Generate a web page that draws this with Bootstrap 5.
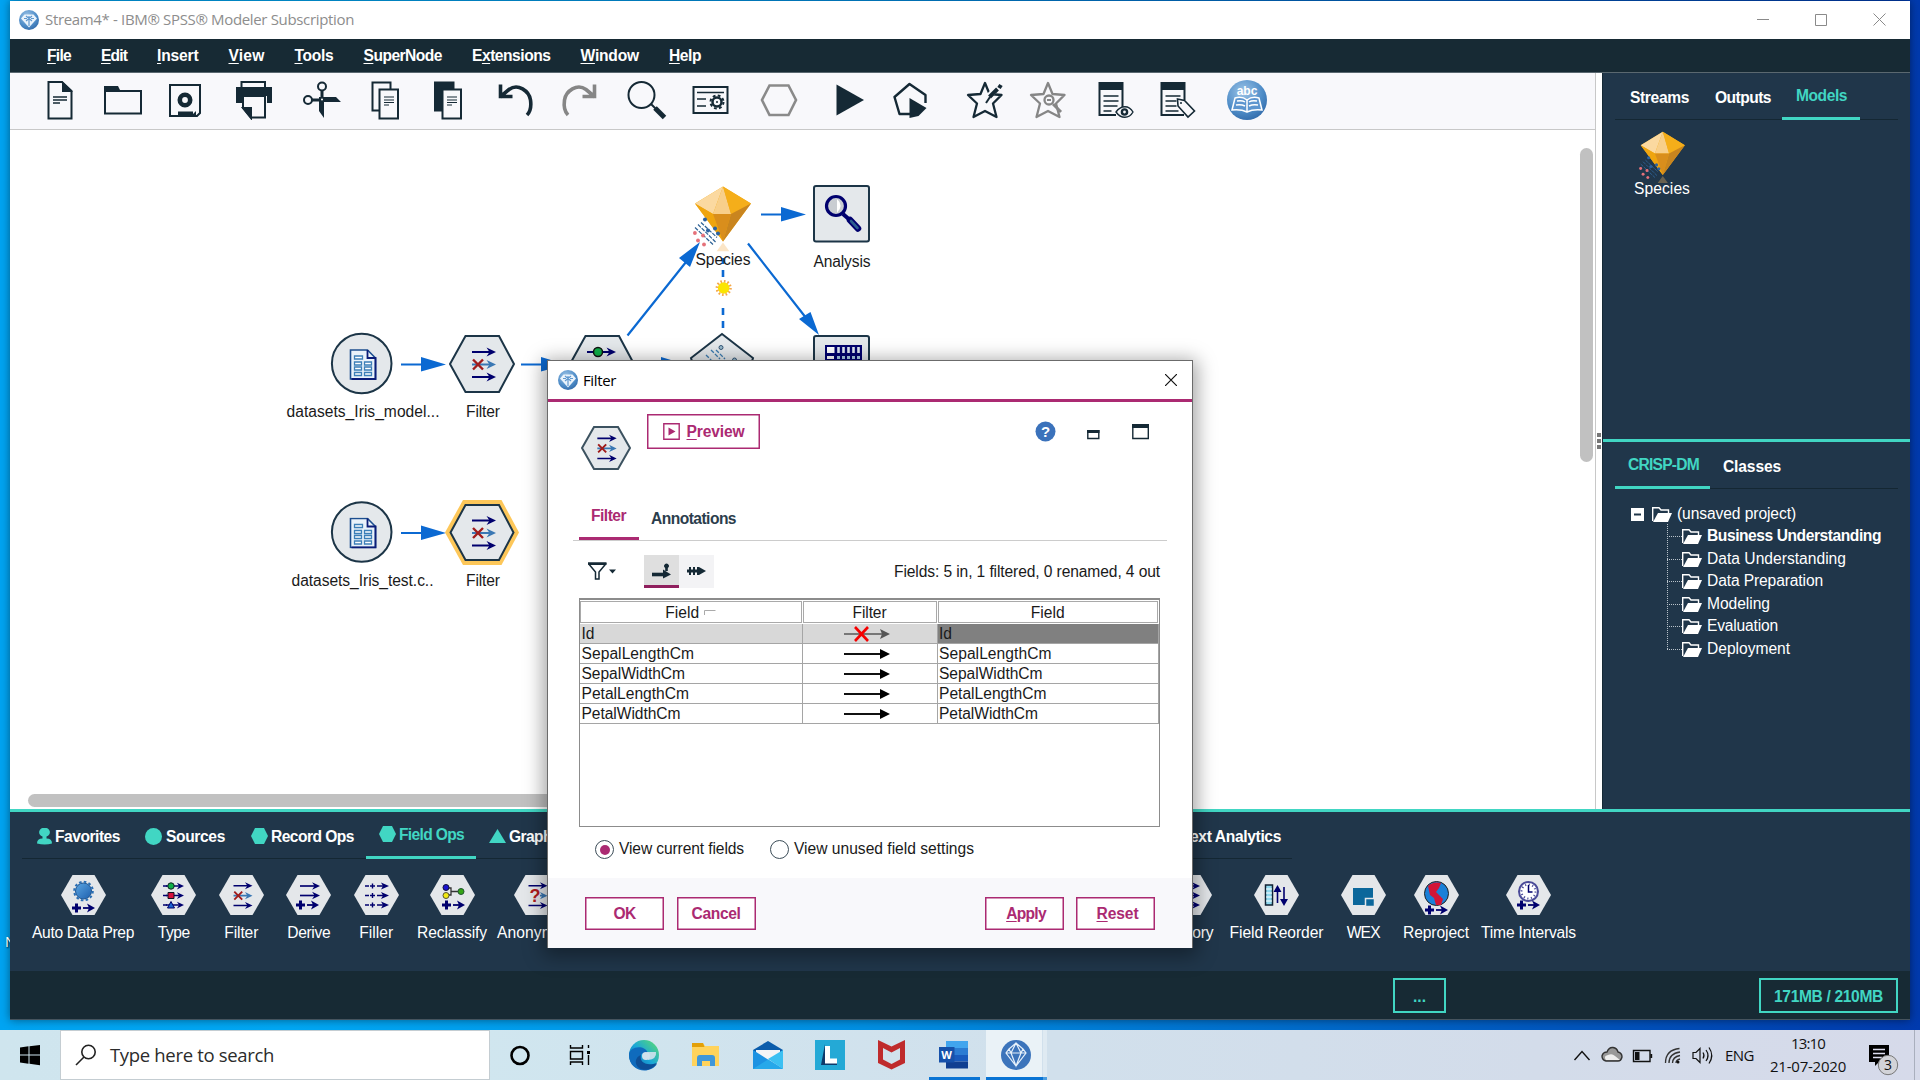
<!DOCTYPE html>
<html lang="en">
<head>
<meta charset="utf-8">
<title>Stream4* - IBM SPSS Modeler Subscription</title>
<link rel="stylesheet" href="https://cdn.jsdelivr.net/npm/bootstrap@5.3.0/dist/css/bootstrap.min.css">
<style>
:root{--navy:#20364a;--dark:#172a34;--teal:#41d6c3;--mag:#ab2a72;--ink:#152935}
body{width:1920px;height:1080px;overflow:hidden;font-family:"Liberation Sans",Arial,sans-serif;font-size:15.6px;line-height:20px;color:#1a1a1a;background:linear-gradient(90deg,#00a4f2 0,#00a8f5 15%,#0090e4 45%,#0060c4 75%,#003aae 100%)}
svg{display:block;flex:none}
.segoe{font-family:"Open Sans","Noto Sans",sans-serif;font-size:15px}
.fit{display:inline-block;white-space:nowrap;width:max-content}
.app-win{margin:1px 10px 0;height:1019px;box-shadow:0 0 9px rgba(0,0,0,.45);border-bottom:1px solid #46545e}
.win-title{height:38px;padding-left:8px;color:#8d8d8d;background:#fff}
.win-title .fit{margin:-2px 0 0 6px}
.menu-bar{height:34px;background:var(--dark);color:#fff;font-weight:700;gap:30px;padding:2px 0 0 37px;border-bottom:1px solid #5a6870}
.menu-bar u,.pv u{text-underline-offset:2px}
.mid{height:736px}
.left-col{width:1586px;border-right:1px solid #c8c8c8}
.tools{height:57px;background:#f8f8fb;border-bottom:1px solid #c8c8c8;padding:0 0 2px 30px;gap:22.6px}
.s6{margin-left:6px}
.split{width:6px;background:#fff;padding:360px 0 0 1px}
.split i{display:block;width:4px;height:4px;background:#777;margin:0 0 2px}
.side{width:308px;background:var(--navy);color:#fff;border-left:1px solid #152935}
.side-top{height:366px}
.side-bot{border-top:3px solid var(--teal);height:370px}
.tabrow{border-bottom:1px solid #142733;font-weight:700}
.tabrow>div{position:relative;white-space:nowrap}
.on{color:var(--teal)}
.bar{position:absolute;height:3px;background:var(--teal);bottom:-1px}
.vsb{width:13px;height:314px;border-radius:7px;background:#c1c1c1;margin-top:18px}
.hsb{width:1100px;height:13px;border-radius:7px;background:#c1c1c1;margin-left:18px}
.palette{height:163px;border-top:3px solid var(--teal);background:var(--navy);color:#fff}
.ptabs{height:47px;width:1270px;margin-left:12px;padding-left:15px;position:relative}
.ptabs>svg{margin:3px 4px 0 0}
.cells{padding-left:22px;gap:12px;margin-top:16px}
.cells>div{width:55.5px;flex:none;display:flex;flex-direction:column;align-items:center;white-space:nowrap}
.cells svg{margin-bottom:8px}
.status{height:48px;background:var(--dark)}
.sbtn{border:2px solid var(--teal);color:var(--teal);font-weight:700;height:35px;display:flex;align-items:center;justify-content:center;padding-top:2px}
.tree{padding:14px 0 0 28px}
.tree .r{height:22.5px;display:flex;align-items:center}
.tree .fit{margin-top:-1px}
.kids{margin-left:36px;position:relative}
.kids .fit{margin-left:5px}
.kids .r:before{content:"";width:15px;border-top:1px dotted #b9c3cb}
.kids:before{content:"";position:absolute;left:0;top:-1px;height:125px;border-left:1px dotted #b9c3cb}
.dlg{position:absolute;left:547px;top:360px;width:646px;height:588px;background:#fff;border:1px solid #6b6b6b;border-bottom:0;box-shadow:0 4px 18px 4px rgba(0,0,0,.36)}
.dlg-title{height:41px;border-bottom:3px solid var(--mag);padding-left:10px;color:#000}
.mbtn{border:1px solid var(--mag);box-shadow:inset 0 0 0 .5px var(--mag);color:var(--mag);font-weight:700;background:#fff;display:flex;align-items:center;justify-content:center}
.dlg-foot{height:70px;background:#f8f8fb;padding:0 37px;gap:12.5px}
.dlg-foot .mbtn{width:79px;height:33px;padding-top:2px}
.ftab{width:581px;height:229px;margin-left:31px;border:1.5px solid #8c8c8c;border-width:2px 1px 1px 1.5px}
.ftab .g{display:grid;grid-template-columns:222.5px 135px 1fr;height:20px}
.ftab .g>div{border-right:1px solid #a5a5a5;border-bottom:1px solid #a5a5a5;padding-left:1.5px;line-height:19px}
.ftab .g>div:nth-child(2){display:flex;align-items:center;justify-content:center;padding-right:7px}
.ftab .hd{height:24px}
.ftab .g.hd>div{border:1px solid #a9a9a9;margin:1px 1px 1px 0;display:flex;align-items:center;justify-content:center;padding:1px 0 0}
.rad{width:19px;height:19px;border:1.5px solid #3c4d58;border-radius:50%;padding:3.5px;background-clip:content-box}
.rad.sel{background-color:var(--mag)}
.taskbar{position:absolute;left:0;top:1030px;width:1920px;height:50px;background:linear-gradient(90deg,#cfe5ee 0,#d0e6ef 25%,#d1e0ec 55%,#d3dcea 80%,#d6daea 100%);color:#111}
.srch{width:430px;height:50px;background:#fff;border:1px solid #c4cdd2;font-size:18.5px;color:#2b2b2b}
.desk-n{position:absolute;left:5px;top:932px;width:5px;overflow:hidden;color:#fff;font-size:14px;text-shadow:1px 1px 2px #000}
</style>
<script src="https://cdn.jsdelivr.net/npm/bootstrap@5.3.0/dist/js/bootstrap.bundle.min.js"></script>
</head>
<body>
<svg width="0" height="0" class="position-absolute">
<defs>
<radialGradient id="bl" cx=".4" cy=".3" r=".8"><stop offset="0" stop-color="#9cc3e6"/><stop offset=".6" stop-color="#4f8dc8"/><stop offset="1" stop-color="#2c64a4"/></radialGradient>
<linearGradient id="em" x1="0" y1="1" x2="1" y2="0"><stop offset="0" stop-color="#0c59a4"/><stop offset=".5" stop-color="#1ba7d8"/><stop offset="1" stop-color="#5fe06a"/></linearGradient>
<linearGradient id="gear" x1="0" y1="0" x2="1" y2="1"><stop offset="0" stop-color="#5ba6e2"/><stop offset="1" stop-color="#1d5fae"/></linearGradient>
<symbol id="logo" viewBox="0 0 20 20"><circle cx="10" cy="10" r="10" fill="url(#bl)"/><path d="M5.500 4.500H14.500L18 8.500L10 17.500L2 8.500Z" fill="#eaf3fb"/><path d="M10 6v10M5 8.500h3M12 8.500h3M7 6l6 5M13 6l-6 5" stroke="#5f98cf" stroke-width="1.200" fill="none"/></symbol>
<symbol id="ar" viewBox="0 -6 24 12" overflow="visible"><path d="M0 0H20" stroke="currentColor" stroke-width="2"/><path d="M14.500-4.500L24 0l-9.500 4.500L17.500 0Z" fill="currentColor"/></symbol>
<symbol id="fil" viewBox="0 0 24 36"><g color="#00006e"><use href="#ar" y="0" width="24" height="12"/><use href="#ar" y="25" width="24" height="12"/></g><g color="#3a78b4"><use href="#ar" y="12.500" width="24" height="12"/></g><path d="M1 13.500l10 10M11 13.500l-10 10" stroke="#a01c1c" stroke-width="2.400"/></symbol>
<symbol id="gem" viewBox="0 0 58 66"><path d="M30 57l-6.500 9h13z" fill="#f3b45c" opacity=".35"/><path d="M30 1L2 18L30 56L58 18Z" fill="#f2aa14"/><path d="M30 1L2 18L20 28.500Z" fill="#fbd9a0"/><path d="M30 1L20 28.500H38Z" fill="#f8cf8a"/><path d="M30 1L38 28.500L58 18Z" fill="#f5ae1a"/><path d="M2 18L20 28.500L30 56Z" fill="#efa50f"/><path d="M20 28.500H38L30 56Z" fill="#d98e1c"/><path d="M38 28.500L58 18L30 56Z" fill="#c9851f"/><g stroke="#2d6296" stroke-width="1.200" stroke-dasharray="4 1.200"><path d="M2 42L20 59M5 39L23 57M8 37L24 52"/></g><g fill="#2c62a0"><circle cx="12" cy="34" r="2"/><circle cx="15" cy="45" r="2"/><circle cx="22" cy="43" r="2"/><circle cx="25" cy="48" r="2"/></g><g fill="#e5717a"><circle cx="1.900" cy="47.500" r="1.900"/><circle cx="10" cy="50" r="1.900"/><circle cx="5" cy="55" r="1.900"/><circle cx="11" cy="59" r="1.900"/></g></symbol>
<symbol id="doc" viewBox="0 0 27 31"><path d="M1 1H18L26 9V30H1Z" fill="#e9f2fa" stroke="#1c4e8f" stroke-width="1.600"/><path d="M18 1V9H26V30H2" fill="none" stroke="#0a1c78" stroke-width="1.800"/><g fill="#fff" stroke="#3c7fb8" stroke-width="1.300"><path d="M5 7h8v3H5zM5 13h7v3H5zM15 13h7v3h-7zM5 18h7v3H5zM15 18h7v3h-7zM5 23.500h7v3H5zM15 23.500h7v3h-7z"/></g></symbol>
<symbol id="hx" viewBox="0 0 45 40"><path d="M11.500 0h22L45 20L33.500 40h-22L0 20Z" fill="#e4e7ea"/></symbol>
<symbol id="pa" viewBox="0 0 24 10" overflow="visible"><path d="M0 5h9M4.500 .500v9" stroke="#00006e" stroke-width="3"/><path d="M11 5h7" stroke="#00006e" stroke-width="1.800"/><path d="M15 .500l8 4.500l-8 4.500l2-4.500z" fill="#00006e"/></symbol>
<symbol id="fold" viewBox="0 0 20 15"><path d="M.700 14V.700H7L9 3h7.500v3" fill="none" stroke="#fff" stroke-width="1.400"/><path d="M1 15L6 6h14l-4 9Z" fill="#fff"/></symbol>
</defs></svg>

<div class="desk-n segoe">N</div>
<main class="app-win d-flex flex-column">
 <header class="win-title segoe d-flex align-items-center">
  <svg width="20" height="20" style="margin-left:1px"><use href="#logo"/></svg>
  <span class="fit" data-w="309">Stream4* - IBM® SPSS® Modeler Subscription</span>
  <svg class="ms-auto" width="160" height="38" viewBox="1750 1 160 38" fill="none" stroke="#8a8a8a"><path d="M1757 19.500h12M1815.500 14.500h11v11h-11zM1873.500 13.500l12 12M1885.500 13.500l-12 12"/></svg>
 </header>
 <nav class="menu-bar d-flex align-items-center">
  <span class="fit" data-w="24"><u>F</u>ile</span><span class="fit" data-w="26"><u>E</u>dit</span><span class="fit" data-w="41.500"><u>I</u>nsert</span><span class="fit" data-w="36"><u>V</u>iew</span><span class="fit" data-w="39"><u>T</u>ools</span><span class="fit" data-w="78.500"><u>S</u>uperNode</span><span class="fit" data-w="78.500">E<u>x</u>tensions</span><span class="fit" data-w="58.500"><u>W</u>indow</span><span class="fit" data-w="32"><u>H</u>elp</span>
 </nav>
 <div class="mid d-flex">
  <section class="left-col bg-white">
   <div class="tools d-flex align-items-center">
    <svg width="40" height="40" viewBox="0 0 40 40" fill="none" stroke="#152935" stroke-width="2"><path d="M8.500 2H22L31.500 11V38.500H8.500Z"/><path d="M22 1V12h11z" fill="#152935" stroke="none"/><path d="M13 17h14M13 20h14M13 23h7" stroke-width="1.300"/></svg>
    <svg width="40" height="40" viewBox="0 0 40 40" fill="none" stroke="#152935" stroke-width="2"><path d="M2 11H38V33.500H2Z"/><path d="M1 6H15L17 10H38v2H1Z" fill="#152935" stroke="none"/></svg>
    <svg width="40" height="40" viewBox="0 0 40 40" fill="none" stroke="#152935" stroke-width="2"><path d="M5 5H35V33L32 36H5Z"/><circle cx="20" cy="20" r="5.200" stroke-width="4.600"/><path d="M13 31.500H28V34l3-3v5H13Z" fill="#152935" stroke="none"/></svg>
    <svg class="s6" width="40" height="40" viewBox="0 0 40 40" fill="none" stroke="#152935" stroke-width="2"><path d="M7.500 8V2H31V8"/><path d="M2 7H38V23H33V16H8V23H2Z" fill="#152935" stroke="none"/><path d="M9 16V28L17 37.500H31V16Z" fill="#f8f8fb"/><path d="M9 28h8v10Z" fill="#152935"/></svg>
    <svg class="s6" width="40" height="40" viewBox="0 0 40 40" fill="none" stroke="#152935" stroke-width="2"><circle cx="20" cy="6.500" r="4"/><circle cx="6" cy="20" r="4"/><path d="M20 10.500V22M10 20h10" stroke-width="3"/><path d="M17 17h17l5 5H22V38l-5-7Z" fill="#152935" stroke="none"/><circle cx="20" cy="19.500" r="1" fill="#fff" stroke="none"/></svg>
    <svg width="40" height="40" viewBox="0 0 40 40" fill="none" stroke="#152935" stroke-width="2"><path d="M14 30.500H7.500V2.500H25.500V9"/><path d="M14.500 9.500H33V38.500H14.500Z"/><path d="M19 17h10M19 20h10M19 22.500h10M19 25h5" stroke-width="1.200"/></svg>
    <svg width="40" height="40" viewBox="0 0 40 40" fill="none" stroke="#152935" stroke-width="2"><path d="M6 1.500H26.500V10H15V31.500H6Z" fill="#152935" stroke="none"/><path d="M14.500 9.500H33V38.500H14.500Z" fill="#f8f8fb"/><path d="M19 17h10M19 20h10M19 22.500h10M19 25h5" stroke-width="1.200"/></svg>
    <svg class="s6" width="40" height="40" viewBox="0 0 40 40" fill="none" stroke="#152935" stroke-width="3.600"><path d="M4 17L13 9.500C22 3 33 11 34.500 20C35.500 27 34 32 31 35M4.500 4.500V16.500H16.500"/></svg>
    <svg width="40" height="40" viewBox="0 0 40 40" fill="none" stroke="#868686" stroke-width="3.600"><path d="M36 17L27 9.500C18 3 7 11 5.500 20C4.500 27 6 32 9 35M35.500 4.500V16.500H23.500"/></svg>
    <svg class="s6" width="40" height="40" viewBox="0 0 40 40" fill="none" stroke="#152935" stroke-width="2"><circle cx="14.500" cy="15" r="13"/><path d="M24 24l5 5" stroke-width="2"/><path d="M28 28l9.500 9.500" stroke-width="5"/></svg>
    <svg width="40" height="40" viewBox="0 0 40 40" fill="none" stroke="#152935" stroke-width="2"><path d="M3.500 7H37.500V33H3.500Z"/><path d="M7 12.500h27M7 19h9M7 26h9" stroke-width="1.500"/><circle cx="27" cy="22" r="4.500" stroke-width="2.500"/><circle cx="27" cy="22" r="6.500" stroke-width="2" stroke-dasharray="2.800 2.300"/><circle cx="27" cy="22" r="1" fill="#152935" stroke="none"/></svg>
    <svg class="s6" width="40" height="40" viewBox="0 0 40 40" fill="none" stroke="#8a8a8a" stroke-width="2.600"><path d="M10.500 5.500H29.500L37 20L29.500 35H10.500L3 20Z"/></svg>
    <svg class="s6" width="40" height="40" viewBox="-1 0 40 40"><path d="M8.500 4.500L36 20L8.500 35.500Z" fill="#152935"/></svg>
    <svg width="40" height="40" viewBox=".500 0 40 40" fill="none" stroke="#152935" stroke-width="2.400"><path d="M20 34H10L5 17L20 4L36 15V23M20 34h2" stroke-linejoin="round"/><path d="M20 18L37 28L29 36L20 38Z" fill="#152935" stroke="none"/></svg>
    <svg style="margin-left:11px" width="40" height="40" viewBox="-3 0 40 40" fill="none" stroke="#152935" stroke-width="2.300" stroke-linejoin="round"><path d="M19 3L23.500 14L35.500 15L27 23.500L30.500 37L19 31L7.500 37L11 23.500L2 15L14.500 14Z"/><path d="M20 23l4-6" stroke-width="2"/><path d="M23 16l10-10" stroke="#f8f8fb" stroke-width="6"/><path d="M23.500 17l8-8M33 8l2-3" stroke-width="4"/></svg>
    <svg width="40" height="40" viewBox="-3 0 40 40" fill="none" stroke="#868686" stroke-width="2.300" stroke-linejoin="round"><path d="M19 3L23.500 14L35.500 15L27 23.500L30.500 37L19 31L7.500 37L11 23.500L2 15L14.500 14Z"/><circle cx="20" cy="20" r="4.500" fill="#f8f8fb"/><path d="M24 24l8 8" stroke-width="3"/><path d="M18 20h4" stroke-width="2"/></svg>
    <svg style="margin-left:7px" width="40" height="40" viewBox="0 0 40 40" fill="none" stroke="#152935" stroke-width="2"><path d="M20 35H3.500V3H26.500V27"/><path d="M3 2h24v8H3z" fill="#152935" stroke="none"/><path d="M7.500 16h15M7.500 21h15M7.500 26h14M7.500 31h8" stroke-width="1.400"/><path d="M20 32c5-7 13-7 17 0c-4 7-12 7-17 0z" stroke-width="1.400" fill="#f8f8fb"/><circle cx="28.500" cy="32" r="2.600" stroke-width="2.400"/></svg>
    <svg width="40" height="40" viewBox="0 0 40 40" fill="none" stroke="#152935" stroke-width="2"><path d="M26 35H3.500V3H26.500V20"/><path d="M3 2h24v8H3z" fill="#152935" stroke="none"/><path d="M7.500 16h15M7.500 21h11M7.500 26h11M7.500 31h13" stroke-width="1.400"/><path d="M19.500 19l7 1.500L36.500 31L30 37L20 26Z" stroke-width="1.600" fill="#f8f8fb"/><circle cx="23" cy="23" r="1" fill="#152935" stroke="none"/></svg>
    <svg class="s6" width="40" height="40" viewBox="0 0 40 40"><circle cx="20" cy="20" r="20" fill="url(#bl)"/><text x="20" y="15" text-anchor="middle" font-size="12" font-weight="700" fill="#fff">abc</text><path d="M8 18q7-2 12 2q5-4 12-2l3 12q-9-1-15 2q-6-3-15-2z" fill="#5c95cf" stroke="#fff" stroke-width="1.500"/><path d="M20 20v11M10 21q5-1 8 1M9 25q5-1 9 1M30 21q-5-1-8 1M31 25q-5-1-9 1" stroke="#fff" stroke-width="1.500" fill="none"/></svg>
   </div>
   <div class="d-flex">
    <svg width="1570" height="664" viewBox="10 130 1570 664" font-size="15.600" text-anchor="middle" fill="#1a1a1a">
     <g stroke="#0b69d2" stroke-width="2.200"><path d="M401 364.500h25M521 364.500h25M401 533h25M761 214.500h25M627.500 335.500L690 257M748 243.500L810 323M650 361.500h15"/><path d="M723 258v6M723 270v7M723 308v7M723 321v7" stroke-width="2.600"/></g>
     <g fill="#0b69d2"><path d="M421 357l25 7.500l-25 7zM541 357l25 7.500l-25 7zM421 525.500l25 7.500l-25 7zM781 207l25 7.500l-25 7zM661 357l25 7.500l-25 7zM700 242L679 258L690 267ZM819 335L799 319L810.500 312Z"/></g>
     <g fill="#e4e8eb" stroke="#1c3547" stroke-width="2">
      <circle cx="361.700" cy="363.500" r="29.800"/><circle cx="361.700" cy="532" r="29.800"/>
      <path d="M465.500 336H499L514 364L499 392H465.500L450 364Z"/>
      <path d="M463 500H501.500L519 532.500L501.500 565H463L445 532.500Z" fill="#fdc759" stroke="none"/>
      <path d="M465.500 505H499L513.500 532.500L499 560H465.500L450.500 532.500Z"/>
      <path d="M585.500 336H619L634 364L619 392H585.500L570 364Z"/>
      <path d="M722 334L753 358L742 393H702L691 358Z"/>
      <rect x="814" y="186" width="55" height="55.500" rx="2"/><rect x="814" y="336" width="55" height="55.500" rx="2"/>
     </g>
     <use href="#doc" x="349" y="349" width="28" height="31"/><use href="#doc" x="349" y="517.500" width="28" height="31"/>
     <use href="#fil" x="472" y="346" width="24" height="36"/><use href="#fil" x="472" y="514.500" width="24" height="36"/>
     <g color="#00006e"><path d="M587 352h10" stroke="#00006e" stroke-width="2"/><use href="#ar" x="592" y="346" width="24" height="12"/><circle cx="598" cy="352" r="4.500" fill="#0faf48" stroke="#111" stroke-width="1.500"/></g>
     <g stroke="#3b7bb0" stroke-width="1.300" stroke-dasharray="4 1.500"><path d="M706 355l8 8M711 350l9 9M716 350l9 9"/></g><circle cx="721" cy="347.500" r="2" fill="#9bc" stroke="#357"/><circle cx="734.500" cy="360" r="2" fill="#9bc" stroke="#357"/>
     <path d="M825 345h37v18h-37z" fill="#00006e"/><path d="M827 347h7.500v6H827zM827 356h7v3h-7z" fill="#fff"/><path d="M838.500 347v6m5-6v6m5-6v6m5-6v6m5-6v6" stroke="#dfe8f2" stroke-width="2.600"/><path d="M837 357.500h23" stroke="#a9cbe6" stroke-width="3" stroke-dasharray="3 2"/>
     <circle cx="836" cy="206" r="9.500" fill="#c9cdd2" stroke="#00006e" stroke-width="3.200"/><path d="M837 199q7 6 0 14z" fill="#fff"/><path d="M843 214l8 7" stroke="#00006e" stroke-width="4"/><path d="M850 220l8 8.500" stroke="#00006e" stroke-width="6.500" stroke-linecap="round"/><path d="M851 221l6.500 7" stroke="#2c5f8f" stroke-width="2.600" stroke-linecap="round"/>
     <use href="#gem" x="693" y="185.500" width="58" height="66"/>
     <circle cx="723.700" cy="288" r="5.800" fill="#fbe500"/><circle cx="723.700" cy="288" r="6.800" fill="none" stroke="#f5a848" stroke-width="2.600" stroke-dasharray="1.600 1.960"/>
     <text x="363" y="417" textLength="153">datasets_Iris_model...</text><text x="483" y="417" textLength="34">Filter</text>
     <text x="362.500" y="586" textLength="142">datasets_Iris_test.c..</text><text x="483" y="586" textLength="34">Filter</text>
     <text x="723" y="265" textLength="55">Species</text><text x="842" y="267" textLength="57">Analysis</text>
    </svg>
    <div class="vsb"></div>
   </div>
   <div class="hsb"></div>
  </section>
  <div class="split"><i></i><i></i><i></i></div>
  <aside class="side">
   <div class="side-top">
    <div class="tabrow d-flex align-items-center" style="height:47px;margin:0 12px;padding-left:15px">
     <span class="fit" style="padding-top:5px" data-w="59">Streams</span><span class="fit" style="margin-left:26px;padding-top:5px" data-w="56">Outputs</span>
     <div class="on h-100" style="margin-left:11px;padding:13px 13px 0 14px"><span class="fit" data-w="51">Models</span><b class="bar start-0 end-0"></b></div>
    </div>
    <div class="d-inline-flex flex-column align-items-center" style="margin:11px 0 0 31px"><svg width="46" height="52"><use href="#gem"/></svg><span class="fit" style="margin-top:-4px" data-w="56">Species</span></div>
   </div>
   <div class="side-bot">
    <div class="tabrow d-flex" style="height:47px;margin:0 12px">
     <div class="on h-100" style="padding:13px 11px 0 13px"><span class="fit" data-w="71">CRISP-DM</span><b class="bar start-0 end-0"></b></div>
     <span class="fit" style="margin:15px 0 0 13px" data-w="58">Classes</span>
    </div>
    <div class="tree">
     <div class="r"><svg width="13" height="13" class="me-2"><path fill="#fff" d="M0 0h13v13H0z"/><path d="M3 6.500h7" stroke="#20364a" stroke-width="2"/></svg><svg width="20" height="15"><use href="#fold"/></svg><span class="fit" style="margin-left:5px" data-w="119">(unsaved project)</span></div>
     <div class="kids">
      <div class="r fw-bold"><svg width="20" height="15"><use href="#fold"/></svg><span class="fit" data-w="174">Business Understanding</span></div>
      <div class="r"><svg width="20" height="15"><use href="#fold"/></svg><span class="fit" data-w="139">Data Understanding</span></div>
      <div class="r"><svg width="20" height="15"><use href="#fold"/></svg><span class="fit" data-w="116">Data Preparation</span></div>
      <div class="r"><svg width="20" height="15"><use href="#fold"/></svg><span class="fit" data-w="63">Modeling</span></div>
      <div class="r"><svg width="20" height="15"><use href="#fold"/></svg><span class="fit" data-w="71">Evaluation</span></div>
      <div class="r"><svg width="20" height="15"><use href="#fold"/></svg><span class="fit" data-w="83">Deployment</span></div>
     </div>
    </div>
   </div>
  </aside>
 </div>
 <section class="palette">
  <div class="tabrow ptabs d-flex align-items-center">
   <svg width="15" height="17" viewBox="0 0 15 17" style="margin-right:3px"><path d="M7.500 0a4.300 4.300 0 0 1 2 8.500v2q5.500 0 5.500 5q-7 2-15 0q0-5 5.500-5v-2a4.300 4.300 0 0 1 2-8.500z" fill="#41d6c3"/></svg><span class="fit pt-1" data-w="65">Favorites</span>
   <svg width="17" height="17" style="margin-left:25px"><circle cx="8.500" cy="8.500" r="8.500" fill="#41d6c3"/></svg><span class="fit pt-1" data-w="59">Sources</span>
   <svg width="17" height="16" viewBox="0 0 17 16" style="margin-left:26px;margin-right:3px"><path d="M4 0h9l4 8l-4 8H4L0 8z" fill="#41d6c3"/></svg><span class="fit pt-1" data-w="83">Record Ops</span>
   <div class="on h-100 d-flex" style="margin-left:12px;padding:14px 12px 0 13px"><svg width="17" height="16" viewBox="0 0 17 16" style="margin-right:3px"><path d="M4 0h9l4 8l-4 8H4L0 8z" fill="#41d6c3"/></svg><span class="fit" style="margin-top:-1px" data-w="65">Field Ops</span><b class="bar start-0 end-0"></b></div>
   <svg width="17" height="14" viewBox="0 0 17 14" style="margin-left:13px;margin-right:3px"><path d="M8.500 0L17 14H0z" fill="#41d6c3"/></svg><span class="fit pt-1" data-w="51">Graphs</span>
   <span class="fit ms-auto pt-1" style="margin-right:11px" data-w="99">Text Analytics</span>
  </div>
  <div class="cells d-flex">
   <div style="width:102px"><svg width="45" height="40"><use href="#hx"/><circle cx="22.500" cy="16" r="8" fill="url(#gear)" stroke="#20558f"/><circle cx="22.500" cy="16" r="9.300" fill="none" stroke="#2a6fb5" stroke-width="2" stroke-dasharray="2.600 2.270"/><use href="#pa" x="11" y="28" width="24" height="10"/></svg><span class="fit" data-w="102">Auto Data Prep</span></div>
   <div><svg width="45" height="40" color="#00006e"><use href="#hx"/><path d="M12 11h10M12 20.500h10M12 30h10" stroke="#00006e" stroke-width="1.500" stroke-dasharray="4 3 20"/><use href="#ar" x="15" y="5" width="18" height="12"/><use href="#ar" x="15" y="14.500" width="18" height="12"/><use href="#ar" x="15" y="24" width="18" height="12"/><circle cx="20" cy="11" r="3.200" fill="#0faf48" stroke="#122"/><path d="M17 17.500h6v6h-6z" fill="#d5103c" stroke="#112"/><path d="M20 26.500l3.500 6.500h-7z" fill="#1a62d0" stroke="#006"/></svg><span class="fit" data-w="32">Type</span></div>
   <div><svg width="45" height="40"><use href="#hx"/><use href="#fil" x="14" y="6" width="20" height="28.500"/></svg><span class="fit" data-w="34">Filter</span></div>
   <div><svg width="45" height="40" color="#00006e"><use href="#hx"/><use href="#ar" x="14" y="5" width="20" height="12"/><use href="#ar" x="14" y="14.500" width="20" height="12"/><use href="#pa" x="10" y="25" width="24" height="10"/></svg><span class="fit" data-w="43">Derive</span></div>
   <div><svg width="45" height="40" color="#00006e"><use href="#hx"/><g id="fl"><path d="M11 11h4M16 11h5M18.500 8.500v5M23 11h8" stroke="#00006e" stroke-width="1.400"/><path d="M27 7.500l8 3.500l-8 3.500l2-3.500z" fill="#00006e"/></g><use href="#fl" y="9.500"/><use href="#fl" y="19"/></svg><span class="fit" data-w="34">Filler</span></div>
   <div style="width:70px;margin-left:1px"><svg width="45" height="40"><use href="#hx"/><path d="M16 13h5v7h-5M21 16.500h10" fill="none" stroke="#333" stroke-width="1.300"/><circle cx="16" cy="12.500" r="3" fill="#1a12d0" stroke="#113"/><circle cx="16" cy="20.500" r="3" fill="#f2ea10" stroke="#553"/><circle cx="31" cy="16.500" r="3" fill="#35a516" stroke="#253"/><use href="#pa" x="12" y="25" width="24" height="10"/></svg><span class="fit" data-w="70">Reclassify</span></div>
   <div style="width:74px"><svg width="45" height="40"><use href="#hx"/><use href="#fil" x="14" y="6" width="20" height="28.500"/><path d="M14 15h12v12H14z" fill="#e4e7ea"/><text x="21" y="27" text-anchor="middle" font-weight="700" font-size="18" fill="#b01c1c">?</text></svg><span class="fit" data-w="78">Anonymize</span></div>
   <div class="ms-auto"><svg width="45" height="40" color="#00006e"><use href="#hx"/><use href="#ar" x="13" y="5" width="20" height="12"/><use href="#ar" x="13" y="14.500" width="20" height="12"/><use href="#ar" x="13" y="24" width="20" height="12"/></svg><span class="fit" data-w="47">History</span></div>
   <div style="width:94px"><svg width="45" height="40"><use href="#hx"/><path d="M11.500 10h7v20h-7z" fill="#8fd8ee" stroke="#123" stroke-width="1.500"/><path d="M12 14h6M12 18h6M12 22h6M12 26h6" stroke="#fff"/><path d="M23.500 14v14M30 12v13" stroke="#00006e" stroke-width="1.600"/><path d="M23.500 10l4 7h-8zM30 31l-4-7h8z" fill="#00006e"/></svg><span class="fit" data-w="94">Field Reorder</span></div>
   <div><svg width="45" height="40"><use href="#hx"/><path d="M12 13h20v17H12z" fill="#0b679b"/><path d="M24.500 23.500h9v8h-9z" fill="#0b679b" stroke="#e4e7ea" stroke-width="1.500"/></svg><span class="fit" data-w="33">WEX</span></div>
   <div style="width:66px"><svg width="45" height="40"><use href="#hx"/><circle cx="22.500" cy="18.500" r="12" fill="#1a80d8" stroke="#222"/><path d="M14 11q5-5 13-3l-2 5l-3 4l4 4l3 3l-2 6l-5 0l-2-7l-4-3z" fill="#d31536"/><use href="#pa" x="11" y="30" width="24" height="10"/></svg><span class="fit" data-w="66">Reproject</span></div>
   <div style="width:95px;margin-right:334px"><svg width="45" height="40"><use href="#hx"/><circle cx="22.500" cy="16.500" r="9.500" fill="#fff" stroke="#4a4a98" stroke-width="2"/><circle cx="22.500" cy="16.500" r="7" fill="none" stroke="#4a4a98" stroke-width="2" stroke-dasharray="1.200 2.460"/><path d="M22.500 10v7h4" fill="none" stroke="#00006e" stroke-width="1.500"/><use href="#pa" x="11" y="25" width="24" height="10"/></svg><span class="fit" data-w="95">Time Intervals</span></div>
  </div>
 </section>
 <footer class="status d-flex">
  <div class="sbtn" style="width:53px;margin:7px 0 0 1383px">...</div>
  <div class="sbtn ms-auto" style="width:139px;margin:7px 12px 0 0"><span class="fit" data-w="109">171MB / 210MB</span></div>
 </footer>
</main>

<div class="dlg">
 <div class="dlg-title segoe d-flex align-items-center">
  <svg width="20" height="20"><use href="#logo"/></svg><span class="fit" style="margin:-1px 0 0 5px" data-w="33">Filter</span>
  <svg class="ms-auto" style="margin-right:15px" width="12" height="12"><path d="M0 0l12 12M12 0L0 12" stroke="#111" stroke-width="1.200"/></svg>
 </div>
 <div class="d-flex" style="height:89px">
  <svg width="50" height="44" viewBox="0 0 50 44" style="margin:24px 0 0 33px"><path d="M13 1H37L49 22L37 43H13L1 22Z" fill="#e4e8eb" stroke="#3c5260" stroke-width="2"/><use href="#fil" x="16" y="7.500" width="20" height="29"/></svg>
  <div class="mbtn pv" style="width:113px;height:35px;margin:12px 0 0 16px;padding-top:1px"><svg width="17" height="17" style="margin:-1px 7px 0 0"><path d="M.800.800h15.400v15.400H.800z" fill="none" stroke="#ab2a72" stroke-width="1.400"/><path d="M5.500 4.500l7 4l-7 4z" fill="#ab2a72"/></svg><span class="fit" data-w="58"><u>P</u>review</span></div>
  <svg class="ms-auto" width="115" height="22" viewBox="1035 420 115 22" style="margin:18px 42px 0 0"><circle cx="1045.500" cy="431.500" r="10" fill="#3b72bb"/><text x="1045.500" y="437" text-anchor="middle" font-weight="700" font-size="15" fill="#fff">?</text><path d="M1087.800 430.800h11v7.700h-11zM1132.800 425h15.500v13.500h-15.500z" fill="none" stroke="#152935" stroke-width="1.400"/><path d="M1087 430h12.500v3H1087zM1132 424h17v4h-17z" fill="#152935"/></svg>
 </div>
 <div class="d-flex" style="margin:0 25px;height:50px;border-bottom:1.500px solid #ccc;padding-left:6px">
  <div style="width:60px;padding:15px 0 0 12px;border-bottom:3px solid var(--mag);color:var(--mag);font-weight:700"><span class="fit" data-w="35">Filter</span></div>
  <span class="fit fw-bold" style="margin:18px 0 0 12px;color:#2b3d4c" data-w="85">Annotations</span>
 </div>
 <div class="d-flex" style="height:57px;padding:14px 32px 0 40px">
  <svg width="28" height="18" viewBox="0 0 28 18" style="margin-top:7px" fill="none" stroke="#152935"><path d="M1 2.200L7.500 10V17H11V10L17.500 2.200Z" stroke-width="1.500"/><path d="M0 1.500h18.500" stroke-width="2.500"/><path d="M21 7.500h7l-3.500 4z" fill="#152935" stroke="none"/></svg>
  <div style="margin-left:28px;width:35px;height:33px;background:#dfdfdf;border-bottom:3px solid #8f1f5d"><svg width="35" height="30" stroke="#152935"><path d="M8 19.500h13" stroke-width="3.600"/><path d="M19 14.500l8 5l-8 4z" fill="#152935" stroke="none"/><path d="M22.500 9v7" stroke-width="2.600"/><circle cx="22.500" cy="11" r="2" fill="#152935"/></svg></div>
  <div style="width:35px;height:33px;background:#f3f3f5"><svg width="35" height="30" stroke="#152935"><path d="M8 16h14" stroke-width="3"/><path d="M11 12v8M15 12v8M19 12v8" stroke-width="2"/><path d="M20 12l7 4l-7 4z" fill="#152935" stroke="none"/></svg></div>
  <span class="fit ms-auto" style="margin-top:7px" data-w="266">Fields: 5 in, 1 filtered, 0 renamed, 4 out</span>
 </div>
 <div class="ftab">
  <div class="g hd"><div><span class="fit" data-w="34">Field</span><svg width="12" height="8" style="margin:0 0 0 5px"><path d="M.500 6V1.500h11" fill="none" stroke="#aaa"/></svg></div><div><span class="fit" data-w="34">Filter</span></div><div><span class="fit" data-w="34">Field</span></div></div>
  <div class="g"><div style="background:#d8d8d8">Id</div><div style="background:#d8d8d8"><svg width="46" height="16" viewBox="0 0 46 16"><path d="M0 8h38" stroke="#777" stroke-width="2"/><path d="M36 3l10 5l-10 5l2-5z" fill="#555"/><path d="M11 1l13 14M24 1L11 15" stroke="#f50000" stroke-width="2.600"/></svg></div><div style="background:#808080">Id</div></div>
  <div class="g"><div><span class="fit" data-w="112.500">SepalLengthCm</span></div><div><svg width="46" height="12" viewBox="0 0 46 12"><path d="M0 6h38" stroke="#111" stroke-width="2"/><path d="M36 1l10 5l-10 5z"/></svg></div><div><span class="fit" data-w="112.500">SepalLengthCm</span></div></div>
  <div class="g"><div><span class="fit" data-w="103.500">SepalWidthCm</span></div><div><svg width="46" height="12" viewBox="0 0 46 12"><path d="M0 6h38" stroke="#111" stroke-width="2"/><path d="M36 1l10 5l-10 5z"/></svg></div><div><span class="fit" data-w="103.500">SepalWidthCm</span></div></div>
  <div class="g"><div><span class="fit" data-w="107.500">PetalLengthCm</span></div><div><svg width="46" height="12" viewBox="0 0 46 12"><path d="M0 6h38" stroke="#111" stroke-width="2"/><path d="M36 1l10 5l-10 5z"/></svg></div><div><span class="fit" data-w="107.500">PetalLengthCm</span></div></div>
  <div class="g"><div><span class="fit" data-w="99">PetalWidthCm</span></div><div><svg width="46" height="12" viewBox="0 0 46 12"><path d="M0 6h38" stroke="#111" stroke-width="2"/><path d="M36 1l10 5l-10 5z"/></svg></div><div><span class="fit" data-w="99">PetalWidthCm</span></div></div>
 </div>
 <div class="d-flex align-items-center" style="height:51px;padding:0 0 7px 47px">
  <span class="rad sel"></span><span class="fit" style="margin-left:5px" data-w="125">View current fields</span>
  <span class="rad" style="margin-left:26px"></span><span class="fit" style="margin-left:5px" data-w="180">View unused field settings</span>
 </div>
 <div class="dlg-foot d-flex align-items-center">
  <div class="mbtn"><span class="fit" data-w="22">OK</span></div><div class="mbtn"><span class="fit" data-w="49">Cancel</span></div>
  <div class="mbtn ms-auto pv"><span class="fit ps-1" data-w="39">​<u>A</u>pply</span></div><div class="mbtn pv"><span class="fit ps-1" data-w="42"><u>R</u>eset</span></div>
 </div>
</div>

<footer class="taskbar segoe d-flex">
 <svg width="60" height="50" viewBox="0 1030 60 50"><path d="M20 1047.500l8.500-1.200v8.200H20zM29.500 1046.200L40 1045v9.500H29.500zM20 1055.500h8.500v8.200L20 1062.500zM29.500 1055.500H40v9.800l-10.500-1.500z"/></svg>
 <div class="srch d-flex align-items-center"><svg width="22" height="22" style="margin:0 13px 0 14px" fill="none" stroke="#222" stroke-width="1.600"><circle cx="13.500" cy="8" r="6.700"/><path d="M9 13L1 21"/></svg><span class="fit" data-w="164">Type here to search</span></div>
 <svg width="1080" height="50" viewBox="490 1030 1080 50">
  <circle cx="520" cy="1055.500" r="8.500" fill="none" stroke="#000" stroke-width="2.600"/>
  <path d="M570.500 1045v3h12v-3M570.500 1065v-3h12v3M570.500 1051.500h12v7.500h-12zM588.500 1045v3M588.500 1055v10" fill="none" stroke="#000" stroke-width="1.400"/><path d="M587 1051h3v3h-3z"/>
  <circle cx="644" cy="1055" r="15" fill="url(#em)"/><path d="M629 1055c0-9 16-11 19-2c-8-2-9 5-6 9c4 5 10 4 15 2c-7 11-28 8-28-9z" fill="#0f6bbd"/><path d="M641 1055c-2 6 4 12 16 8c-5 8-14 8-18 5c-5-4-4-11 2-13z" fill="#0d4e96"/><circle cx="646" cy="1056" r="4" fill="#cfe2ed"/><path d="M647 1052h9q1 7-8 8z" fill="#cfe2ed" opacity=".9"/>
  <path d="M692 1043h11l2 3h14v20h-27z" fill="#ffd35c"/><path d="M692 1043h11l1.500 4H692z" fill="#e3a008"/><path d="M697 1066v-8q0-3 3-3h12q3 0 3 3v8h-5v-5h-8v5z" fill="#3f97da"/>
  <path d="M753 1050l15-9l15 9v8h-30z" fill="#0b5cab"/><path d="M756 1050h24v8l-12 4l-12-4z" fill="#f4f4f6"/><path d="M753 1050l30 19h-30z" fill="#1c92e2"/><path d="M783 1050l-15 9l15 10z" fill="#3cc0f2"/><path d="M753 1069l15-9.500l15 9.500z" fill="#26a8ea"/>
  <path d="M815 1040h30v30h-30z" fill="#24a9d6"/><path d="M821 1065l4-21v18h12v3z" fill="#0e3a6b"/><path d="M827.500 1046v15h9.500" fill="none" stroke="#fff" stroke-width="5"/>
  <path d="M878 1040l13.500 6.500L905 1040v23l-13.500 6.500L878 1063z" fill="#bf2b2c"/><path d="M883 1048l8.500 4.500L900 1048v11.500l-8.500 4.500L883 1059.500z" fill="#d1e2ec"/>
  <path d="M946 1041h22v7h-22z" fill="#41a5ee"/><path d="M946 1048h22v7h-22z" fill="#2b7cd3"/><path d="M946 1055h22v6.500h-22z" fill="#185abd"/><path d="M946 1061.500h22v7h-22z" fill="#103f91"/><rect x="939" y="1047" width="15.500" height="15.500" fill="#1651aa"/><text x="946.500" y="1059" text-anchor="middle" font-size="11" font-weight="700" fill="#fff">W</text>
  <path d="M986 1030h56v50h-56z" fill="#eaf2f7"/><path d="M1043 1030h4v50h-4z" fill="#dfeaf2"/><path d="M929 1077h51v3h-51zM986 1077h57v3h-57z" fill="#0a74d4"/><path d="M1043 1077h4v3h-4z" fill="#4c9de0"/>
  <circle cx="1016" cy="1055" r="15" fill="#3c74bb"/><path d="M1009 1049l7-6l7 6l3 4l-10 13l-10-13zM1006 1053h20M1016 1043l-5 10l5 13l5-13zM1009 1049l2 4M1023 1049l-2 4" fill="none" stroke="#e6f0fa" stroke-width="1.200"/>
 </svg>
 <svg width="150" height="50" viewBox="1570 1030 150 50" fill="none" stroke="#111" stroke-width="1.400">
  <path d="M1574.500 1060l7.500-8.500l7.500 8.500"/><path d="M1606 1061q-4-1-4-5q1-4 5-4q2-5 6-4.500q4 .500 5 4.500q4 1 4 5q-1 4-4 4z" fill="#999" stroke="#333"/><path d="M1606 1060q-3-4 2-5q4-2 7 1l5 4z" fill="#eee" stroke="none"/>
  <path d="M1633.500 1050.500h16.500v11h-16.500zM1651.500 1054v4"/><path d="M1635 1052h4.500v8h-4.500z" fill="#111" stroke="none"/>
  <g stroke="#333" stroke-width="1.300"><path d="M1665.500 1063q0-13 14-14.500M1669 1063q0-9.500 11-11M1672.500 1063q0-6 7.500-7.500M1676 1063q0-3 4-4"/></g><circle cx="1678" cy="1062" r="1.500" fill="#111" stroke="none"/>
  <path d="M1693 1052.500h3l4-4v14l-4-4h-3zM1703 1052.500q2 3 0 6M1706 1050q4 5.500 0 11M1709 1047.500q5.500 8 0 16" stroke-width="1.200"/>
 </svg>
 <span class="fit" style="margin:15px 0 0 5px" data-w="29">ENG</span>
 <div class="d-flex flex-column align-items-center" style="width:76px;margin-left:16px;padding-top:3px"><span class="fit" data-w="34">13:10</span><span class="fit" style="margin-top:3px" data-w="76">21-07-2020</span></div>
 <svg class="ms-auto" width="60" height="50" viewBox="1860 1030 60 50"><path d="M1869 1045h20v17h-10l-4 4v-4h-6z"/><path d="M1873 1049.500h12M1873 1053.500h12M1873 1057.500h9" stroke="#dde" stroke-width="1.300"/><circle cx="1888" cy="1065" r="9.700" fill="#d2d3d8" stroke="#777"/><text x="1888" y="1070" text-anchor="middle" font-size="14" fill="#111">3</text><path d="M1914.500 1030v50" stroke="#a9afbd"/></svg>
</footer>
<script>
// Letter-space each label so that it fills its nominal width.
document.querySelectorAll('.fit[data-w]').forEach(function (el) {
  var cs = getComputedStyle(el);
  var cur = el.getBoundingClientRect().width - parseFloat(cs.paddingLeft) - parseFloat(cs.paddingRight);
  el.style.letterSpacing = ((parseFloat(el.dataset.w) - cur) / el.textContent.length) + 'px';
});
</script>
</body>
</html>
